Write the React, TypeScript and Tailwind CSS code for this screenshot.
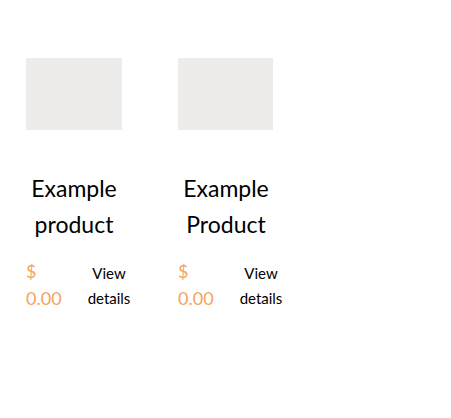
export default function App() {
  const items = [
    { title: "Example product" },
    { title: "Example Product" },
  ];
  return (
    <div className="min-h-[418px] w-[451px] bg-white pt-[58px] pl-[26px]" style={{ fontFamily: "Lato, 'Noto Sans', sans-serif" }}>
      <div className="flex gap-[56px]">
        {items.map((it, i) => (
          <div key={i} className="w-[96px] flex flex-col">
            <div className={i === 0 ? "w-[96px] h-[72px] bg-[#edecea]" : "w-[95px] h-[72px] bg-[#edecea]"} />
            <div className="mt-[40px] -mx-[4px] text-center text-[23px] leading-[36px] text-black">
              {it.title}
            </div>
            <div className="mt-[16px] flex items-start w-[110px]">
              <div className="w-[40px] text-[18px] leading-[27px] text-[#f4a460]">
                $<br />0.00
              </div>
              <div className="ml-[20px] w-[46px] -mr-[4px] text-center text-[15px] leading-[25px] text-black pt-[3px]">
                View details
              </div>
            </div>
          </div>
        ))}
      </div>
    </div>
  );
}
